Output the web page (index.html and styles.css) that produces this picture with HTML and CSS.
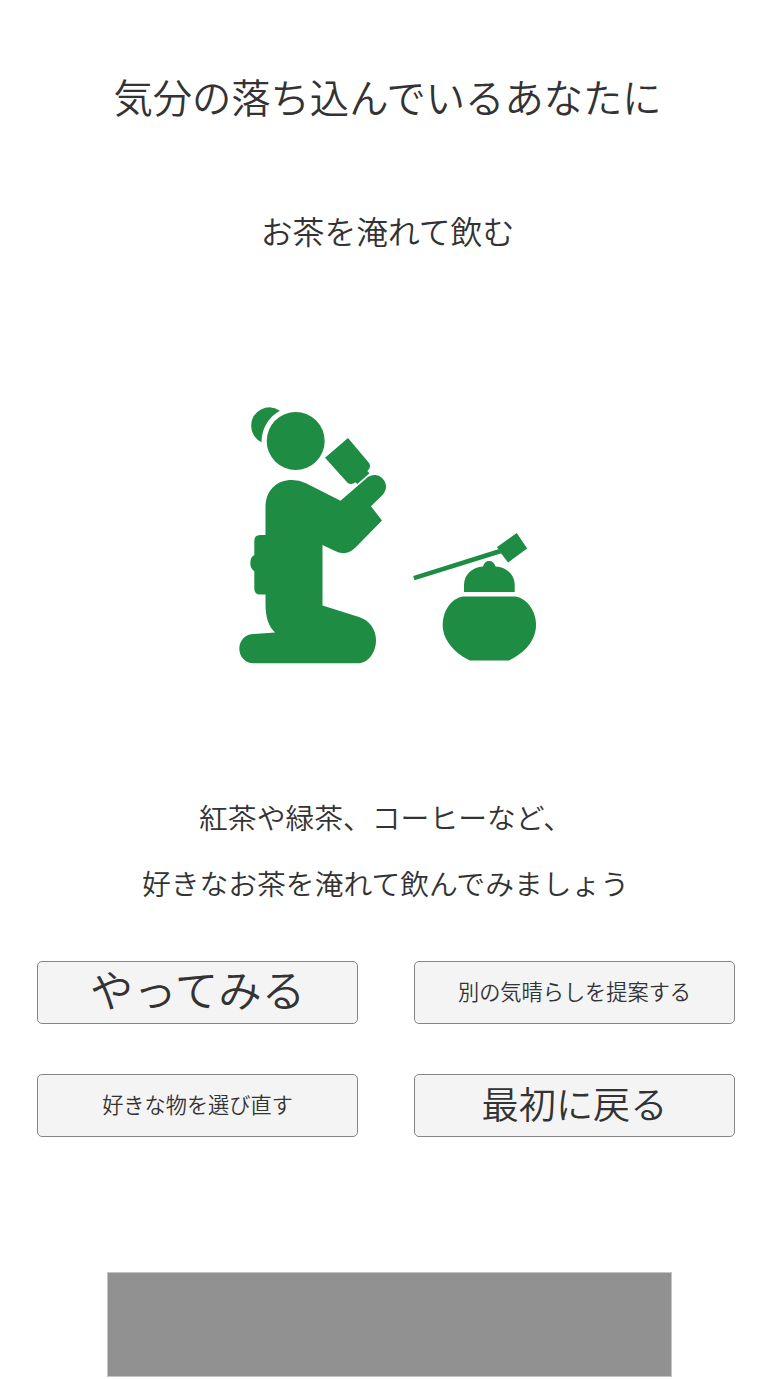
FILE: index.html
```
<!DOCTYPE html>
<html lang="ja">
<head>
  <meta charset="UTF-8" />
  <meta name="viewport" content="width=device-width, initial-scale=1.0"/>
  <title>気分の落ち込んでいるあなたに</title>
  <link rel="stylesheet" href="styles.css">
</head>
<body>
  <main class="container">
    <h1>気分の落ち込んでいるあなたに</h1>
    <h2>お茶を淹れて飲む</h2>

    <svg class="illust" viewBox="237 405 302 261" aria-hidden="true">
      <!-- person -->
      <circle cx="295.7" cy="441" r="29"/>
      <path d="M280 410.8A18.3 18.3 0 0 0 251.200 426C251.200 433 255.500 439.500 261.600 442.200A34.500 34.500 0 0 1 280 410.800Z"/>
      <path d="M348 438L369.300 463.200Q371 466 369.300 468.800L367.300 471L369.500 473.300L357.300 484L355.300 482.300Q352 485 348 483.200L325 457.800Z"/>
      <path d="M265.500 507C265.500 490 277 480 292 480Q299 480 306 483.300L340.500 500.800L366.500 478.300C370.500 474.500 376 474 380 476.500C387 481 388 489 382.500 495L371 506.300L382 520.500L355.500 547.500Q346 557 334 550.500L322.500 545V605.500L359 617C369 620 376 629 376 640C376 653 368 663.300 358 663.300H253.500C245.500 663.300 239.300 657 239.300 648.500C239.300 640 246 634 253.500 634L275 632.500C268.500 626 265.500 618 265.500 603V594.500H260Q254.300 594.500 254.300 588.500V571.200Q250.300 568.500 250.300 563Q250.300 557 254.300 555V541Q254.300 535 260 535H265.500Z"/>
      <!-- ladle -->
      <path d="M413.200 576L499 549L501.500 553.300L414.500 580.200Z"/>
      <path d="M516.700 533L527.200 548.500L508 562.600L500.500 552.500L499 549.500L496.800 547.300Z"/>
      <!-- pot -->
      <path d="M464 592V585C464 574 473 567 483 566.500C484 563 486 561 489.200 561C492.300 561 494.500 563 495.500 566.500C506 567 514.700 574 514.700 585V592Z"/>
      <path d="M463 596.500H515.500C526 598 536 610 536 625C536 641 524 653 509 660.600H470C456 654 442.700 641 442.700 625C442.700 610 452 598 463 596.500Z"/>
    </svg>

    <p class="message">紅茶や緑茶、コーヒーなど、<br>好きなお茶を淹れて飲んでみましょう</p>

    <div class="buttons">
      <button class="btn btn-try">やってみる</button>
      <button class="btn">別の気晴らしを提案する</button>
      <button class="btn">好きな物を選び直す</button>
      <button class="btn btn-top">最初に戻る</button>
    </div>

    <div class="banner"></div>
  </main>
</body>
</html>
```
FILE: styles.css
```
* {
  box-sizing: border-box;
}

body {
  margin: 0;
  background: #fff;
  color: #333;
  font-family: "Noto Sans CJK JP", sans-serif;
  font-weight: 350;
}

.container {
  display: flex;
  flex-direction: column;
  align-items: center;
  height: 1379px;
  padding-top: 66px;
}

h1 {
  margin: 0;
  font-size: 39.3px;
  font-weight: 350;
  line-height: 60px;
}

h2 {
  margin: 80px 0 0;
  font-size: 31.8px;
  font-weight: 350;
  line-height: 48px;
}

.illust {
  display: block;
  width: 302px;
  height: 261px;
  margin-top: 151px;
  fill: #1e8c43;
}

.message {
  margin: 118px 0 0;
  padding-right: 4px;
  font-size: 28.8px;
  line-height: 66px;
  text-align: center;
}

.buttons {
  display: grid;
  grid-template-columns: 321px 321px;
  gap: 50px 56px;
  width: 698px;
  margin-top: 45px;
  margin-right: 3px;
}

.btn {
  height: 63px;
  padding: 0 0 4px;
  border: 1px solid #858585;
  border-radius: 5px;
  background: #f4f4f4;
  color: #333;
  font-family: inherit;
  font-size: 21.2px;
  font-weight: 350;
  cursor: pointer;
}

.btn-try {
  padding-bottom: 8px;
  font-size: 43.5px;
  line-height: 54px;
}

.btn-top {
  padding-bottom: 5px;
  font-size: 37.2px;
  line-height: 54px;
}

.banner {
  width: 565px;
  height: 105px;
  margin: 135px 0 0 4px;
  border: 1px solid #c4c4c4;
  background: #919191;
}
```
